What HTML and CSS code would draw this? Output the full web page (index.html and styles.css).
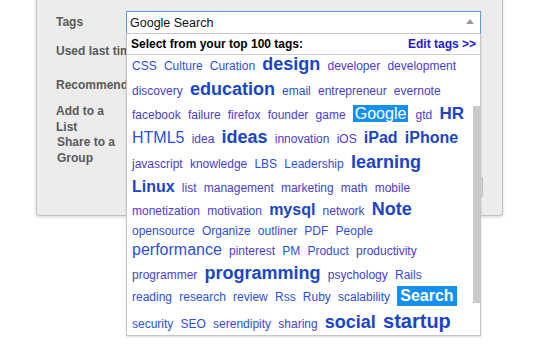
FILE: index.html
```html
<!DOCTYPE html>
<html>
<head>
<meta charset="utf-8">
<link rel="stylesheet" href="styles.css">
</head>
<body>
<div class="panel">
  <div class="form">
    <div class="labels">
      <div class="lbl l-tags">Tags</div>
      <div class="lbl l-used">Used last time</div>
      <div class="lbl l-rec">Recommended</div>
      <div class="lbl l-add">Add to a<br>List</div>
      <div class="lbl l-share">Share to a<br>Group</div>
    </div>
    <div class="field">
      <div class="combo">
        <div class="input"><span class="value">Google Search</span><span class="caret"></span></div>
        <div class="dropdown">
          <div class="dd-head">
            <span class="dd-title">Select from your top 100 tags:</span>
            <span class="dd-edit">Edit tags &gt;&gt;</span>
          </div>
          <div class="cloud">
            <div class="row"><span class="t b">CSS</span><span class="t b">Culture</span><span class="t b">Curation</span><span class="t big s18">design</span><span class="t v">developer</span><span class="t v">development</span></div>
            <div class="row"><span class="t v">discovery</span><span class="t big s18">education</span><span class="t b">email</span><span class="t v">entrepreneur</span><span class="t v">evernote</span></div>
            <div class="row"><span class="t v">facebook</span><span class="t v">failure</span><span class="t v">firefox</span><span class="t v">founder</span><span class="t v">game</span><span class="t hl s16">Google</span><span class="t v">gtd</span><span class="t big s17">HR</span></div>
            <div class="row"><span class="t b s16 n16">HTML5</span><span class="t v">idea</span><span class="t big s18">ideas</span><span class="t v">innovation</span><span class="t v">iOS</span><span class="t big s16">iPad</span><span class="t big s16">iPhone</span></div>
            <div class="row"><span class="t v">javascript</span><span class="t v">knowledge</span><span class="t b">LBS</span><span class="t b">Leadership</span><span class="t big s18">learning</span></div>
            <div class="row"><span class="t big s16">Linux</span><span class="t v">list</span><span class="t v">management</span><span class="t v">marketing</span><span class="t v">math</span><span class="t v">mobile</span></div>
            <div class="row"><span class="t v">monetization</span><span class="t v">motivation</span><span class="t big s16">mysql</span><span class="t v">network</span><span class="t big s18">Note</span></div>
            <div class="row"><span class="t b">opensource</span><span class="t b">Organize</span><span class="t b">outliner</span><span class="t b">PDF</span><span class="t b">People</span></div>
            <div class="row"><span class="t b s16 n16">performance</span><span class="t v">pinterest</span><span class="t b">PM</span><span class="t b">Product</span><span class="t v">productivity</span></div>
            <div class="row"><span class="t v">programmer</span><span class="t big s18">programming</span><span class="t v">psychology</span><span class="t b">Rails</span></div>
            <div class="row"><span class="t b">reading</span><span class="t b">research</span><span class="t b">review</span><span class="t b">Rss</span><span class="t b">Ruby</span><span class="t b">scalability</span><span class="t hl hlb s16">Search</span></div>
            <div class="row"><span class="t b">security</span><span class="t b">SEO</span><span class="t b">serendipity</span><span class="t v">sharing</span><span class="t big s18">social</span><span class="t big s20">startup</span></div>
          </div>
          <div class="thumb"></div>
        </div>
      </div>
      <div class="btn-edge"></div>
    </div>
  </div>
</div>
</body>
</html>
```

FILE: styles.css
```css
* { box-sizing: border-box; }
html, body { margin: 0; padding: 0; background: #ffffff; }
body {
  font-family: "Liberation Sans", Arial, sans-serif;
  width: 539px;
  height: 350px;
  overflow: hidden;
}
.panel {
  margin: -10px 0 0 36px;
  width: 467px;
  height: 226px;
  background: #ececec;
  border: 1px solid #c2c2c2;
  border-top: 0;
  border-radius: 0 0 4px 4px;
  box-shadow: 0 1px 3px rgba(0,0,0,0.18);
}
.form {
  display: flex;
  padding: 21px 0 0 19px;
}
.labels {
  width: 70px;
  flex: none;
  display: flex;
  flex-direction: column;
}
.lbl {
  font-size: 12px;
  font-weight: bold;
  color: #595959;
  white-space: nowrap;
  line-height: 15.5px;
}
.l-tags { line-height: 22px; }
.l-used { margin-top: 11px; }
.l-rec { margin-top: 18px; }
.l-add { margin-top: 11px; }
.l-share { padding-left: 1px; }
.field {
  flex: none;
  width: 376px;
  display: flex;
  flex-direction: column;
}
.combo {
  position: relative;
  width: 355px;
  z-index: 2;
}
.input {
  height: 23px;
  border: 1px solid #5b9be3;
  border-bottom-color: #c9c9c9;
  background: #fff;
  display: flex;
  align-items: center;
  justify-content: space-between;
  padding: 0 6px 0 3px;
}
.value {
  font-size: 12.5px;
  color: #111;
}
.caret {
  width: 0;
  height: 0;
  border-left: 4.5px solid transparent;
  border-right: 4.5px solid transparent;
  border-bottom: 5px solid #9a9a9a;
  margin-top: -2px;
}
.dropdown {
  position: absolute;
  left: 0;
  top: 100%;
  width: 355px;
  height: 302px;
  background: #fff;
  border: 1px solid #c6c6c6;
  border-top: 0;
  box-shadow: 0 1px 2px rgba(0,0,0,0.15);
}
.dd-head {
  display: flex;
  justify-content: space-between;
  align-items: center;
  height: 21px;
  padding: 0 4px 0 4px;
  border-bottom: 1px solid #cfcfcf;
  font-size: 12px;
  font-weight: bold;
}
.dd-title { color: #000; }
.dd-edit { color: #1b1bdc; }
.cloud {
  display: flex;
  flex-direction: column;
  row-gap: 5px;
  padding: 0 10px 0 5px;
}
.row {
  display: flex;
  align-items: baseline;
  column-gap: 7.2px;
}
.t {
  font-size: 12px;
  line-height: 1.1;
  white-space: nowrap;
}
.t.b { color: #2c4fd6; }
.t.v { color: #4a3ccd; }
.t.big { color: #1a45c8; font-weight: bold; }
.t.s16 { font-size: 16px; }
.t.n16 { line-height: 0.9; }
.t.s17 { font-size: 17px; }
.t.s18 { font-size: 18px; }
.t.s20 { font-size: 20px; }
.t.hl {
  background: #1590f0;
  color: #fff;
  padding: 0 2px;
}
.t.hlb {
  font-weight: bold;
  line-height: 1;
  padding: 2px 3px;
  margin: -2px 0;
}
.thumb {
  position: absolute;
  right: 0;
  top: 72px;
  width: 7px;
  height: 197px;
  background: #c9c9c9;
}
.btn-edge {
  margin: 143px 0 0 277px;
  width: 80px;
  height: 20px;
  background: #e4e4e4;
  border: 1px solid #bdbdbd;
  border-radius: 2px;
}
```
